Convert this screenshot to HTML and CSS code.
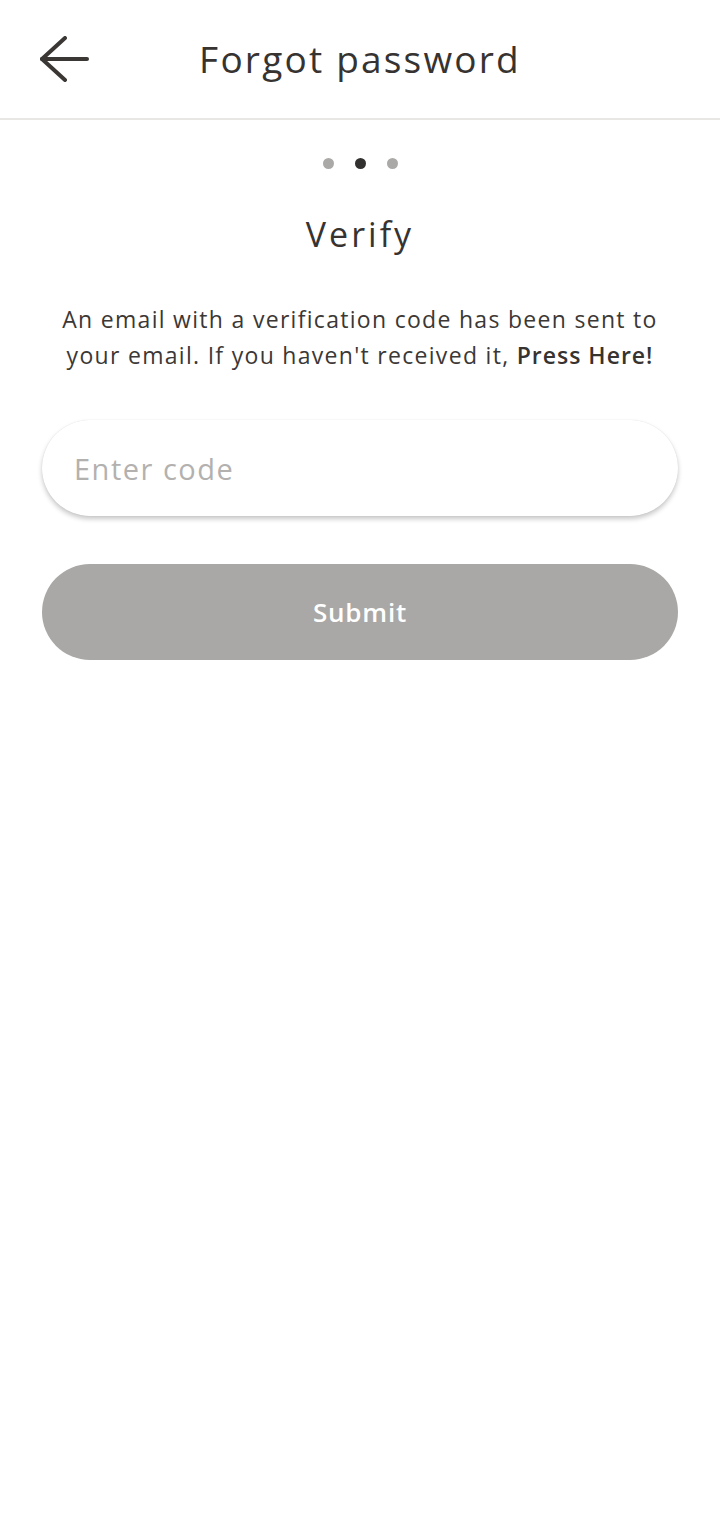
FILE: index.html
```html
<!DOCTYPE html>
<html lang="en">
<head>
<meta charset="utf-8">
<title>Forgot password</title>
<link rel="stylesheet" href="styles.css">
</head>
<body>
<div class="screen">
  <header class="topbar">
    <button class="back" aria-label="Back">
      <svg width="50" height="46" viewBox="0 0 50 46" fill="none" stroke="#3a3735" stroke-width="4" stroke-linecap="round" stroke-linejoin="round">
        <path d="M25 2 L2 23 L25 44"/>
        <path d="M2 23 H47"/>
      </svg>
    </button>
    <h1 class="title">Forgot password</h1>
  </header>
  <main class="content">
    <div class="dots">
      <span class="dot"></span>
      <span class="dot active"></span>
      <span class="dot"></span>
    </div>
    <h2 class="heading">Verify</h2>
    <p class="desc">An email with a verification code has been sent to your email. If you haven't received it, <strong>Press Here!</strong></p>
    <div class="field">
      <input class="code-input" type="text" placeholder="Enter code">
    </div>
    <button class="submit">Submit</button>
  </main>
</div>
</body>
</html>
```

FILE: styles.css
```css
* { box-sizing: border-box; }
html, body { margin: 0; padding: 0; background: #ffffff; }
body {
  font-family: "Open Sans", "DejaVu Sans", sans-serif;
  color: #363331;
}
.screen { width: 720px; min-height: 1520px; }
.topbar {
  height: 120px;
  border-bottom: 2px solid #e9e7e4;
  display: flex;
  align-items: center;
  justify-content: center;
  position: relative;
}
.back {
  position: absolute;
  left: 40px;
  top: 36px;
  padding: 0;
  border: 0;
  background: none;
  display: flex;
}
.title {
  margin: 0;
  font-size: 37px;
  line-height: 50px;
  font-weight: 400;
  letter-spacing: 2.2px;
  color: #363331;
}
.content {
  padding: 0 42px;
  display: flex;
  flex-direction: column;
  align-items: stretch;
}
.dots {
  margin-top: 38px;
  display: flex;
  justify-content: center;
  gap: 21px;
}
.dot {
  width: 11px; height: 11px; border-radius: 50%;
  background: #aaa9a7;
}
.dot.active { background: #333030; }
.heading {
  margin: 40px 0 0;
  text-align: center;
  font-size: 34px;
  font-weight: 400;
  line-height: 50px;
  letter-spacing: 3px;
  color: #363331;
}
.desc {
  margin: 42px 10px 0;
  text-align: center;
  font-size: 23px;
  line-height: 36px;
  letter-spacing: 1.3px;
  color: #3b3836;
}
.desc strong { font-weight: 600; color: #363331; letter-spacing: 1px; }
.field {
  margin-top: 47px;
  height: 96px;
  border-radius: 48px;
  background: #fff;
  box-shadow: 0 3px 5px rgba(0,0,0,0.22), 0 0 1px rgba(0,0,0,0.12);
  display: flex;
  align-items: center;
  padding: 0 32px;
}
.code-input {
  border: 0; outline: none; width: 100%;
  font-family: inherit;
  font-size: 29px;
  letter-spacing: 1.5px;
  color: #363331;
  background: transparent;
  padding: 0;
}
.code-input::placeholder { color: #b3b1af; }
.submit {
  margin-top: 48px;
  height: 96px;
  border: 0;
  border-radius: 48px;
  background: #a9a8a6;
  color: #ffffff;
  font-family: inherit;
  font-size: 26px;
  letter-spacing: 0.8px;
  font-weight: 600;
}
```
